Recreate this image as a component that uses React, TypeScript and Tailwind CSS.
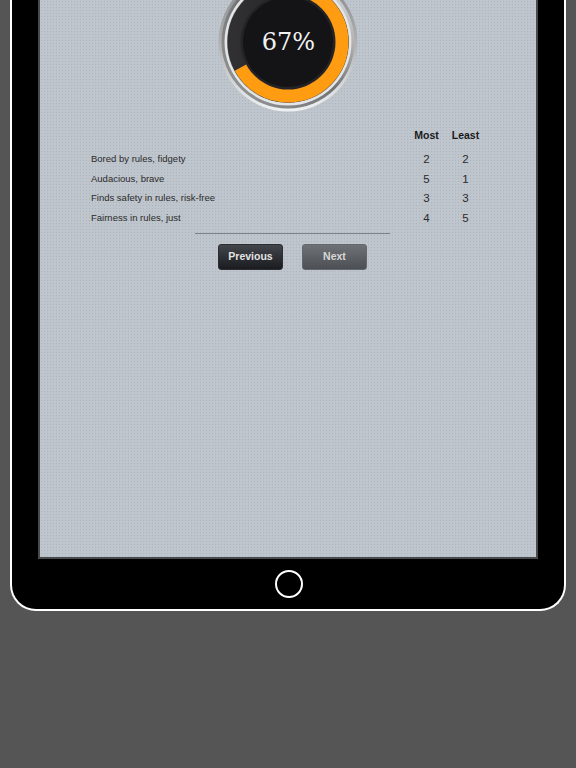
const rows = [
  { label: "Bored by rules, fidgety", most: 2, least: 2 },
  { label: "Audacious, brave", most: 5, least: 1 },
  { label: "Finds safety in rules, risk-free", most: 3, least: 3 },
  { label: "Fairness in rules, just", most: 4, least: 5 },
]

const Gauge = () => {
  const cx = 70
  const cy = 42
  const r = 53.5
  const c = 2 * Math.PI * r
  return (
    <svg width="140" height="112" viewBox="0 0 140 112" className="block">
      <defs>
        <linearGradient id="chrome" x1="0" y1="0" x2="0" y2="1">
          <stop offset="0" stopColor="#7f8183" />
          <stop offset="0.55" stopColor="#b4b6b8" />
          <stop offset="1" stopColor="#f0f1f2" />
        </linearGradient>
        <linearGradient id="chrome2" x1="1" y1="0" x2="0" y2="1">
          <stop offset="0" stopColor="#f4f4f5" />
          <stop offset="0.5" stopColor="#6f7173" />
          <stop offset="1" stopColor="#9a9c9e" />
        </linearGradient>
        <linearGradient id="track" x1="0" y1="0" x2="1" y2="0">
          <stop offset="0" stopColor="#303032" />
          <stop offset="1" stopColor="#1c1c1e" />
        </linearGradient>
      </defs>
      <circle cx={cx} cy={cy} r="69.5" fill="url(#chrome)" />
      <circle cx={cx} cy={cy} r="66.5" fill="url(#chrome2)" />
      <circle cx={cx} cy={cy} r="63.5" fill="#e4e5e6" />
      <circle cx={cx} cy={cy} r="61" fill="#8a8c8e" />
      <circle cx={cx} cy={cy} r={r} fill="none" stroke="url(#track)" strokeWidth="14" />
      <circle
        cx={cx}
        cy={cy}
        r={r}
        fill="none"
        stroke="#ff9c12"
        strokeWidth="14"
        strokeDasharray={`${c * 0.67} ${c}`}
        transform={`rotate(-90 ${cx} ${cy})`}
      />
      <circle cx={cx} cy={cy} r="47.5" fill="#242426" />
      <circle cx={cx} cy={cy} r="45" fill="#141416" />
    </svg>
  )
}

const App = () => {
  return (
    <div className="h-[768px] w-[576px] overflow-hidden bg-[#555555] [font-family:'Liberation_Sans',Arial,sans-serif]">
      <div className="ml-[10px] flex h-[611px] w-[556px] flex-col rounded-b-[26px] border-x-2 border-b-2 border-white bg-black px-[26px]">
        <div className="h-[559px] w-[500px] border-x-2 border-b-2 border-[#47494b] bg-[#bfc5cd] bg-[radial-gradient(#aeb4bc_0.7px,transparent_0.8px)] bg-[length:3px_3px]">
          <div className="relative ml-[178px] w-[140px]">
            <Gauge />
            <div className="absolute left-0 right-0 top-[27px] pl-px text-center text-[24px] leading-[30px] text-[#f2f2f2] [font-family:'DejaVu_Serif',serif]">
              67%
            </div>
          </div>

          <div className="mt-[16px] pl-[51px]">
            <div className="grid grid-cols-[316px_39px_39px] text-center text-[10.5px] font-bold leading-[14px] text-[#1a1a1a]">
              <div />
              <div>Most</div>
              <div>Least</div>
            </div>
            <div className="mt-[10px] flex flex-col gap-[5.6px]">
              {rows.map((row) => (
                <div key={row.label} className="grid grid-cols-[316px_39px_39px] items-center leading-[14px] text-[#2b2b2b]">
                  <div className="text-[9.5px]">{row.label}</div>
                  <div className="text-center text-[11.5px]">{row.most}</div>
                  <div className="text-center text-[11.5px]">{row.least}</div>
                </div>
              ))}
            </div>
          </div>

          <div className="ml-[155px] mt-[8px] h-px w-[195px] bg-[#7d8085]" />

          <div className="ml-[178px] mt-[10px] flex gap-[19px] text-[10.5px] font-bold">
            <button className="h-[26px] w-[65px] rounded-[3px] border border-[#2b2d30] bg-gradient-to-b from-[#43464a] to-[#1a1c20] text-[#e4e4e4]">
              Previous
            </button>
            <button className="h-[26px] w-[65px] rounded-[3px] border border-[#63666a] bg-gradient-to-b from-[#6e7175] to-[#4c4f53] text-[#d8d8d8]">
              Next
            </button>
          </div>
        </div>
        <div className="flex flex-1 items-center justify-center pl-[2px]">
          <div className="size-[28px] rounded-full border-2 border-white" />
        </div>
      </div>
    </div>
  )
}

export default App
